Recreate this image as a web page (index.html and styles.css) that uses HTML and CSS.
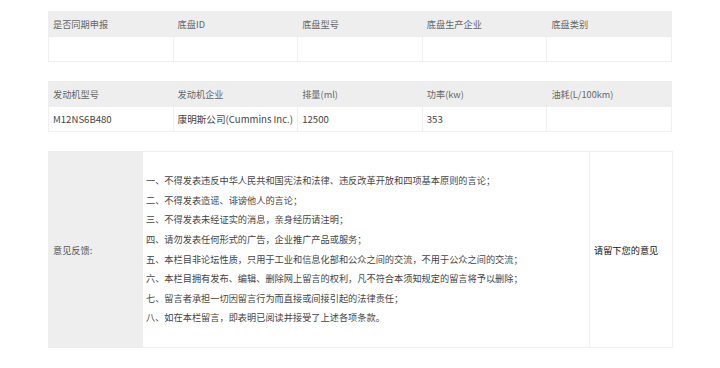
FILE: index.html
```html
<!DOCTYPE html>
<html lang="zh">
<head>
<meta charset="utf-8">
<link rel="stylesheet" href="styles.css">
</head>
<body>
<div class="page">
  <table class="grid">
    <colgroup><col><col><col><col><col></colgroup>
    <thead>
      <tr><th>是否同期申报</th><th>底盘ID</th><th>底盘型号</th><th>底盘生产企业</th><th>底盘类别</th></tr>
    </thead>
    <tbody>
      <tr><td></td><td></td><td></td><td></td><td></td></tr>
    </tbody>
  </table>
  <table class="grid">
    <thead>
      <tr><th>发动机型号</th><th>发动机企业</th><th>排量(ml)</th><th>功率(kw)</th><th>油耗(L/100km)</th></tr>
    </thead>
    <tbody>
      <tr><td>M12NS6B480</td><td>康明斯公司(Cummins Inc.)</td><td>12500</td><td>353</td><td></td></tr>
    </tbody>
  </table>
  <table class="feedback">
    <colgroup><col class="c-label"><col class="c-rules"><col class="c-input"></colgroup>
    <tr>
      <td class="label">意见反馈:</td>
      <td class="rules">
        <p>一、不得发表违反中华人民共和国宪法和法律、违反改革开放和四项基本原则的言论；</p>
        <p>二、不得发表造谣、诽谤他人的言论；</p>
        <p>三、不得发表未经证实的消息，亲身经历请注明；</p>
        <p>四、请勿发表任何形式的广告，企业推广产品或服务；</p>
        <p>五、本栏目非论坛性质，只用于工业和信息化部和公众之间的交流，不用于公众之间的交流；</p>
        <p>六、本栏目拥有发布、编辑、删除网上留言的权利，凡不符合本须知规定的留言将予以删除；</p>
        <p>七、留言者承担一切因留言行为而直接或间接引起的法律责任；</p>
        <p>八、如在本栏留言，即表明已阅读并接受了上述各项条款。</p>
      </td>
      <td class="input">请留下您的意见</td>
    </tr>
  </table>
</div>
</body>
</html>
```
FILE: styles.css
```css
html, body {
  margin: 0;
  padding: 0;
  background: #fff;
}
body {
  font-family: "Noto Sans CJK SC", "Noto Sans", sans-serif;
  font-size: 9.2px;
  color: #333;
}
.page {
  padding: 11px 0 0 48px;
  width: 624px;
}
table {
  border-collapse: collapse;
  table-layout: fixed;
  width: 624px;
  margin: 0 0 19px 0;
}
.grid th, .grid td {
  height: 25px;
  padding: 0 4px;
  text-align: left;
  vertical-align: middle;
  white-space: nowrap;
  overflow: hidden;
  border: 1px solid #f0f0f0;
  box-sizing: border-box;
}
.grid th {
  background: #eeeeee;
  color: #666;
  font-weight: normal;
  border-color: #eeeeee;
}
.grid td {
  color: #444;
  font-size: 9.6px;
}
.feedback td {
  border: 1px solid #f0f0f0;
  height: 196px;
  box-sizing: border-box;
  vertical-align: middle;
  padding: 0 4px;
}
.c-label { width: 94px; }
.c-rules { width: 447px; }
.c-input { width: 83px; }
.feedback .label {
  background: #eeeeee;
  color: #555;
  border-color: #eeeeee;
}
.feedback .rules {
  padding-left: 3px;
  color: #444;
}
.rules p {
  margin: 0;
  line-height: 19.6px;
  white-space: nowrap;
}
.feedback .input {
  color: #111;
  font-weight: normal;
  white-space: nowrap;
}
```
